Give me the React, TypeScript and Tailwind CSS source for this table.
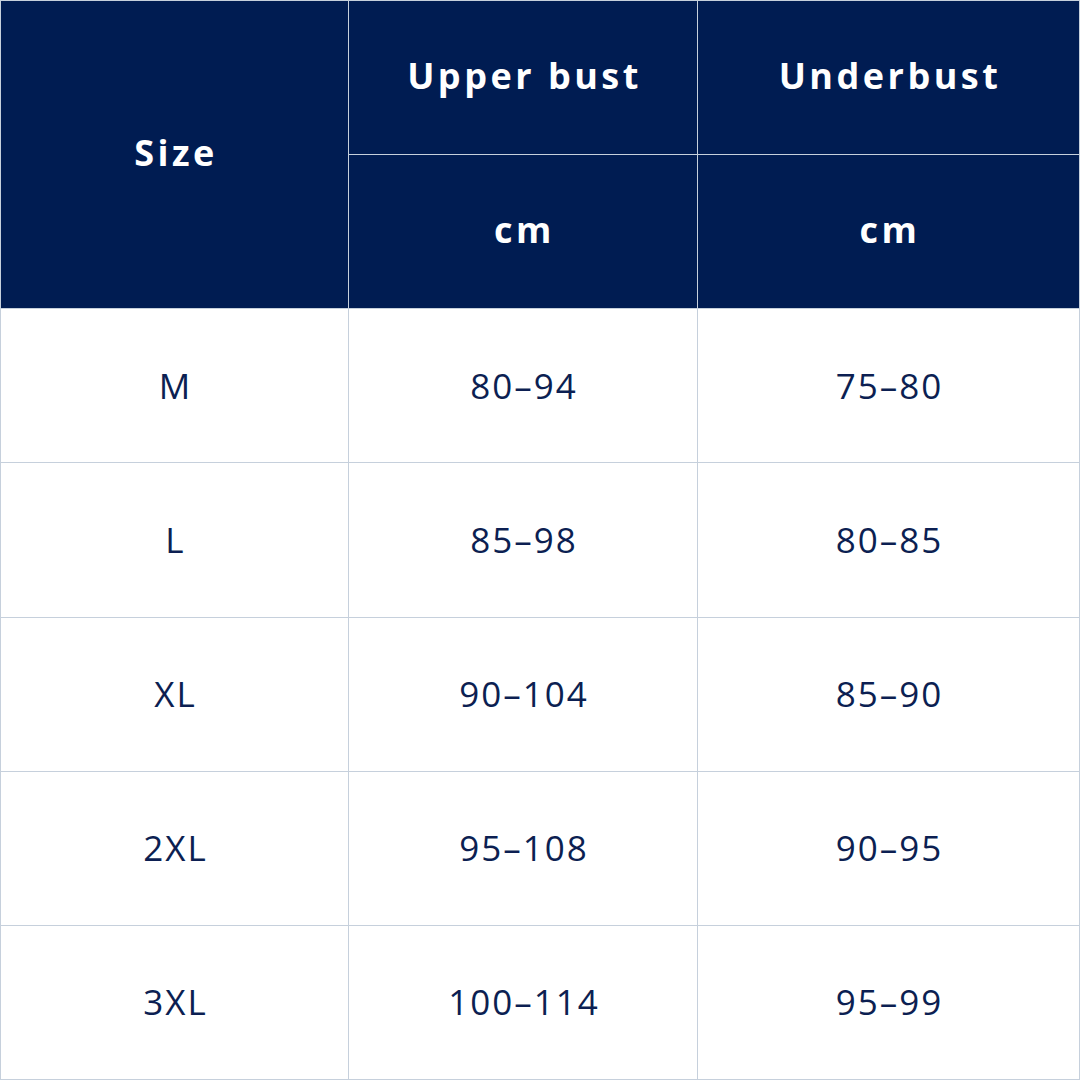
const rows = [
  ['M', '80–94', '75–80'],
  ['L', '85–98', '80–85'],
  ['XL', '90–104', '85–90'],
  ['2XL', '95–108', '90–95'],
  ['3XL', '100–114', '95–99'],
];

const head = 'bg-[#001c52] flex items-center justify-center text-white font-bold text-[36px] tracking-[3.5px] pl-[3px] pb-1';

export default function App() {
  return (
    <div
      className="w-[1080px] h-[1080px] bg-[#c6d0dc] p-px grid grid-cols-[347px_348px_1fr] grid-rows-7 gap-px"
      style={{ fontFamily: '"Open Sans", "Noto Sans", sans-serif' }}
    >
      <div className={`row-span-2 ${head}`}>Size</div>
      <div className={head}>Upper bust</div>
      <div className={head}>Underbust</div>
      <div className={head}>cm</div>
      <div className={head}>cm</div>
      {rows.map((r) =>
        r.map((v, i) => (
          <div
            key={r[0] + i}
            className="bg-white flex items-center justify-center text-[#0c1f52] font-medium text-[35px] tracking-[2px] pl-[2px]"
          >
            {v}
          </div>
        ))
      )}
    </div>
  );
}
